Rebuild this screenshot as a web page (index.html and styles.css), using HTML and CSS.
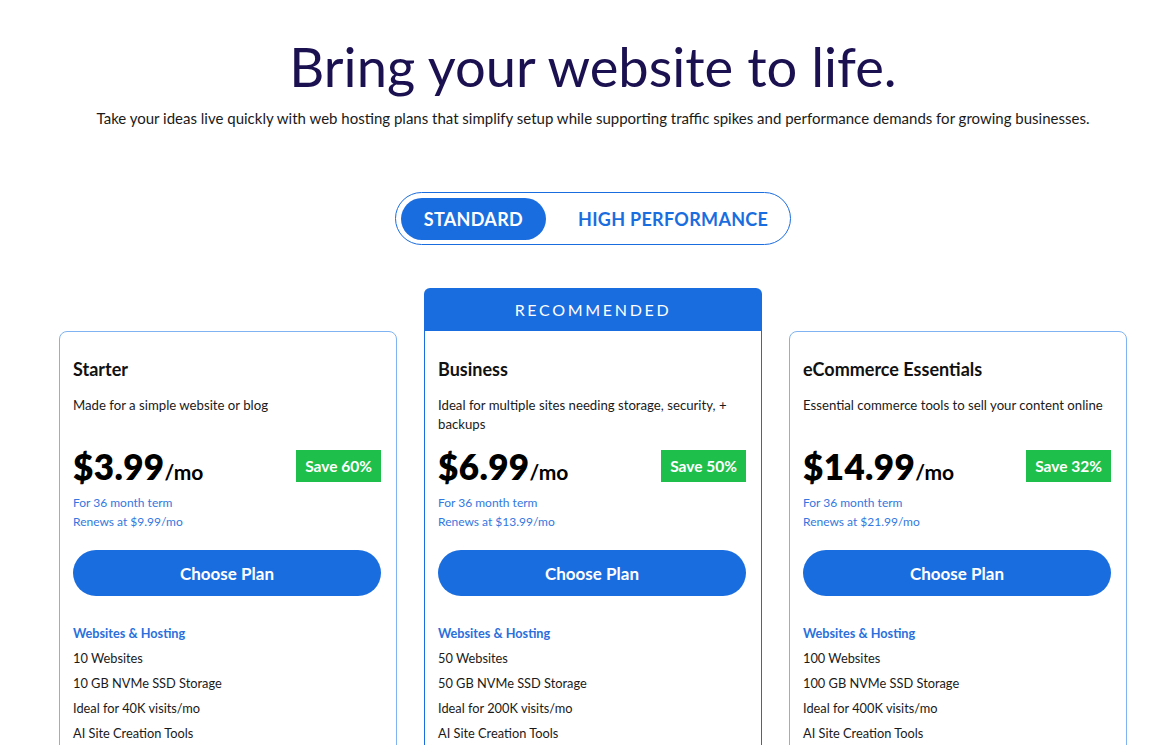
FILE: index.html
```html
<!DOCTYPE html>
<html lang="en">
<head>
<meta charset="utf-8">
<title>Bring your website to life.</title>
<link rel="stylesheet" href="styles.css">
</head>
<body>
<main class="page">
  <header class="hero">
    <h1 class="hero-title">Bring your website to life.</h1>
    <p class="hero-sub">Take your ideas live quickly with web hosting plans that simplify setup while supporting traffic spikes and performance demands for growing businesses.</p>
  </header>

  <div class="toggle-wrap">
    <div class="toggle">
      <button class="tab tab-active">STANDARD</button>
      <button class="tab tab-alt">HIGH PERFORMANCE</button>
    </div>
  </div>

  <section class="plans">
    <div class="plan-col plan-col-offset">
      <article class="plan">
        <h2 class="plan-name">Starter</h2>
        <p class="plan-desc">Made for a simple website or blog</p>
        <div class="price-row">
          <div class="price"><span class="price-amount">$3.99</span><span class="price-unit">/mo</span></div>
          <span class="save">Save 60%</span>
        </div>
        <p class="term">For 36 month term</p>
        <p class="term">Renews at $9.99/mo</p>
        <button class="choose">Choose Plan</button>
        <h3 class="feat-head">Websites &amp; Hosting</h3>
        <ul class="feats">
          <li>10 Websites</li>
          <li>10 GB NVMe SSD Storage</li>
          <li>Ideal for 40K visits/mo</li>
          <li>AI Site Creation Tools</li>
        </ul>
      </article>
    </div>

    <div class="plan-col">
      <div class="rec">RECOMMENDED</div>
      <article class="plan plan-featured">
        <h2 class="plan-name">Business</h2>
        <p class="plan-desc">Ideal for multiple sites needing storage, security, + backups</p>
        <div class="price-row">
          <div class="price"><span class="price-amount">$6.99</span><span class="price-unit">/mo</span></div>
          <span class="save">Save 50%</span>
        </div>
        <p class="term">For 36 month term</p>
        <p class="term">Renews at $13.99/mo</p>
        <button class="choose">Choose Plan</button>
        <h3 class="feat-head">Websites &amp; Hosting</h3>
        <ul class="feats">
          <li>50 Websites</li>
          <li>50 GB NVMe SSD Storage</li>
          <li>Ideal for 200K visits/mo</li>
          <li>AI Site Creation Tools</li>
        </ul>
      </article>
    </div>

    <div class="plan-col plan-col-offset">
      <article class="plan">
        <h2 class="plan-name">eCommerce Essentials</h2>
        <p class="plan-desc">Essential commerce tools to sell your content online</p>
        <div class="price-row">
          <div class="price"><span class="price-amount">$14.99</span><span class="price-unit">/mo</span></div>
          <span class="save">Save 32%</span>
        </div>
        <p class="term">For 36 month term</p>
        <p class="term">Renews at $21.99/mo</p>
        <button class="choose">Choose Plan</button>
        <h3 class="feat-head">Websites &amp; Hosting</h3>
        <ul class="feats">
          <li>100 Websites</li>
          <li>100 GB NVMe SSD Storage</li>
          <li>Ideal for 400K visits/mo</li>
          <li>AI Site Creation Tools</li>
        </ul>
      </article>
    </div>
  </section>
</main>
</body>
</html>
```

FILE: styles.css
```css
* { box-sizing: border-box; }

html, body {
  margin: 0;
  padding: 0;
  background: #ffffff;
}

body {
  font-family: "Lato", "Liberation Sans", sans-serif;
  color: #1a1a1a;
  overflow: hidden;
}

.page {
  padding-left: 10px;
}

.hero {
  text-align: center;
  padding-top: 34px;
}

.hero-title {
  margin: 0;
  font-size: 54.3px;
  line-height: 64px;
  font-weight: 400;
  color: #1b1150;
}

.hero-sub {
  margin: 10px 0 0;
  font-size: 15px;
  line-height: 20px;
  color: #1a1a1a;
}

.toggle-wrap {
  display: flex;
  justify-content: center;
  margin-top: 64px;
}

.toggle {
  display: flex;
  align-items: center;
  gap: 9px;
  border: 1px solid #1a6ddf;
  border-radius: 27px;
  padding: 5px;
  height: 53px;
}

.tab {
  font-family: inherit;
  font-size: 18px;
  letter-spacing: 0.3px;
  font-weight: 700;
  height: 42px;
  border: none;
  border-radius: 21px;
  background: transparent;
  color: #1a6ddf;
  padding: 0 23px;
  cursor: pointer;
}

.tab-active {
  background: #1a6ddf;
  color: #ffffff;
}

.tab-alt {
  padding: 0 17px 0 23px;
}

.plans {
  display: flex;
  gap: 27px;
  padding-left: 49px;
  margin-top: 43px;
  align-items: flex-start;
}

.plan-col {
  width: 338px;
  flex: none;
  display: flex;
  flex-direction: column;
}

.plan-col-offset {
  padding-top: 43px;
}

.rec {
  height: 43px;
  background: #1a6ddf;
  color: #ffffff;
  border-radius: 6px 6px 0 0;
  display: flex;
  align-items: center;
  justify-content: center;
  font-size: 16px;
  letter-spacing: 2.7px;
  font-weight: 400;
}

.plan {
  border: 1px solid #80b3f1;
  border-radius: 8px;
  padding: 26px 15px 60px 13px;
}

.plan-featured {
  border-color: #1a6ddf;
  border-top: none;
  border-radius: 0 0 8px 8px;
  padding-top: 27px;
}

.plan-name {
  margin: 0;
  font-size: 18px;
  line-height: 22px;
  font-weight: 700;
  color: #111111;
}

.plan-desc {
  margin: 16px 0 0;
  font-size: 13.2px;
  line-height: 19px;
  min-height: 38px;
  color: #1a1a1a;
}

.price-row {
  display: flex;
  justify-content: space-between;
  align-items: center;
  margin-top: 16px;
  height: 32px;
}

.price {
  display: flex;
  align-items: baseline;
  color: #000000;
}

.price-amount {
  font-size: 35px;
  font-weight: 800;
  letter-spacing: 0.4px;
}

.price-unit {
  font-size: 21px;
  font-weight: 700;
}

.save {
  background: #1fbf4b;
  color: #ffffff;
  font-size: 15.5px;
  font-weight: 700;
  height: 32px;
  width: 85px;
  display: flex;
  align-items: center;
  justify-content: center;
}

.term {
  margin: 0;
  font-size: 12px;
  line-height: 19px;
  color: #3378e0;
}

.price-row + .term {
  margin-top: 11px;
}

.choose {
  display: block;
  width: 100%;
  height: 46px;
  margin-top: 19px;
  border: none;
  border-radius: 23px;
  background: #1a6ddf;
  color: #ffffff;
  font-family: inherit;
  font-size: 17px;
  font-weight: 700;
  cursor: pointer;
}

.feat-head {
  margin: 25px 0 0;
  font-size: 12.7px;
  line-height: 25px;
  font-weight: 700;
  color: #2a6fdc;
}

.feats {
  list-style: none;
  margin: 0;
  padding: 0;
}

.feats li {
  font-size: 12.8px;
  line-height: 25px;
  color: #1a1a1a;
}
```
